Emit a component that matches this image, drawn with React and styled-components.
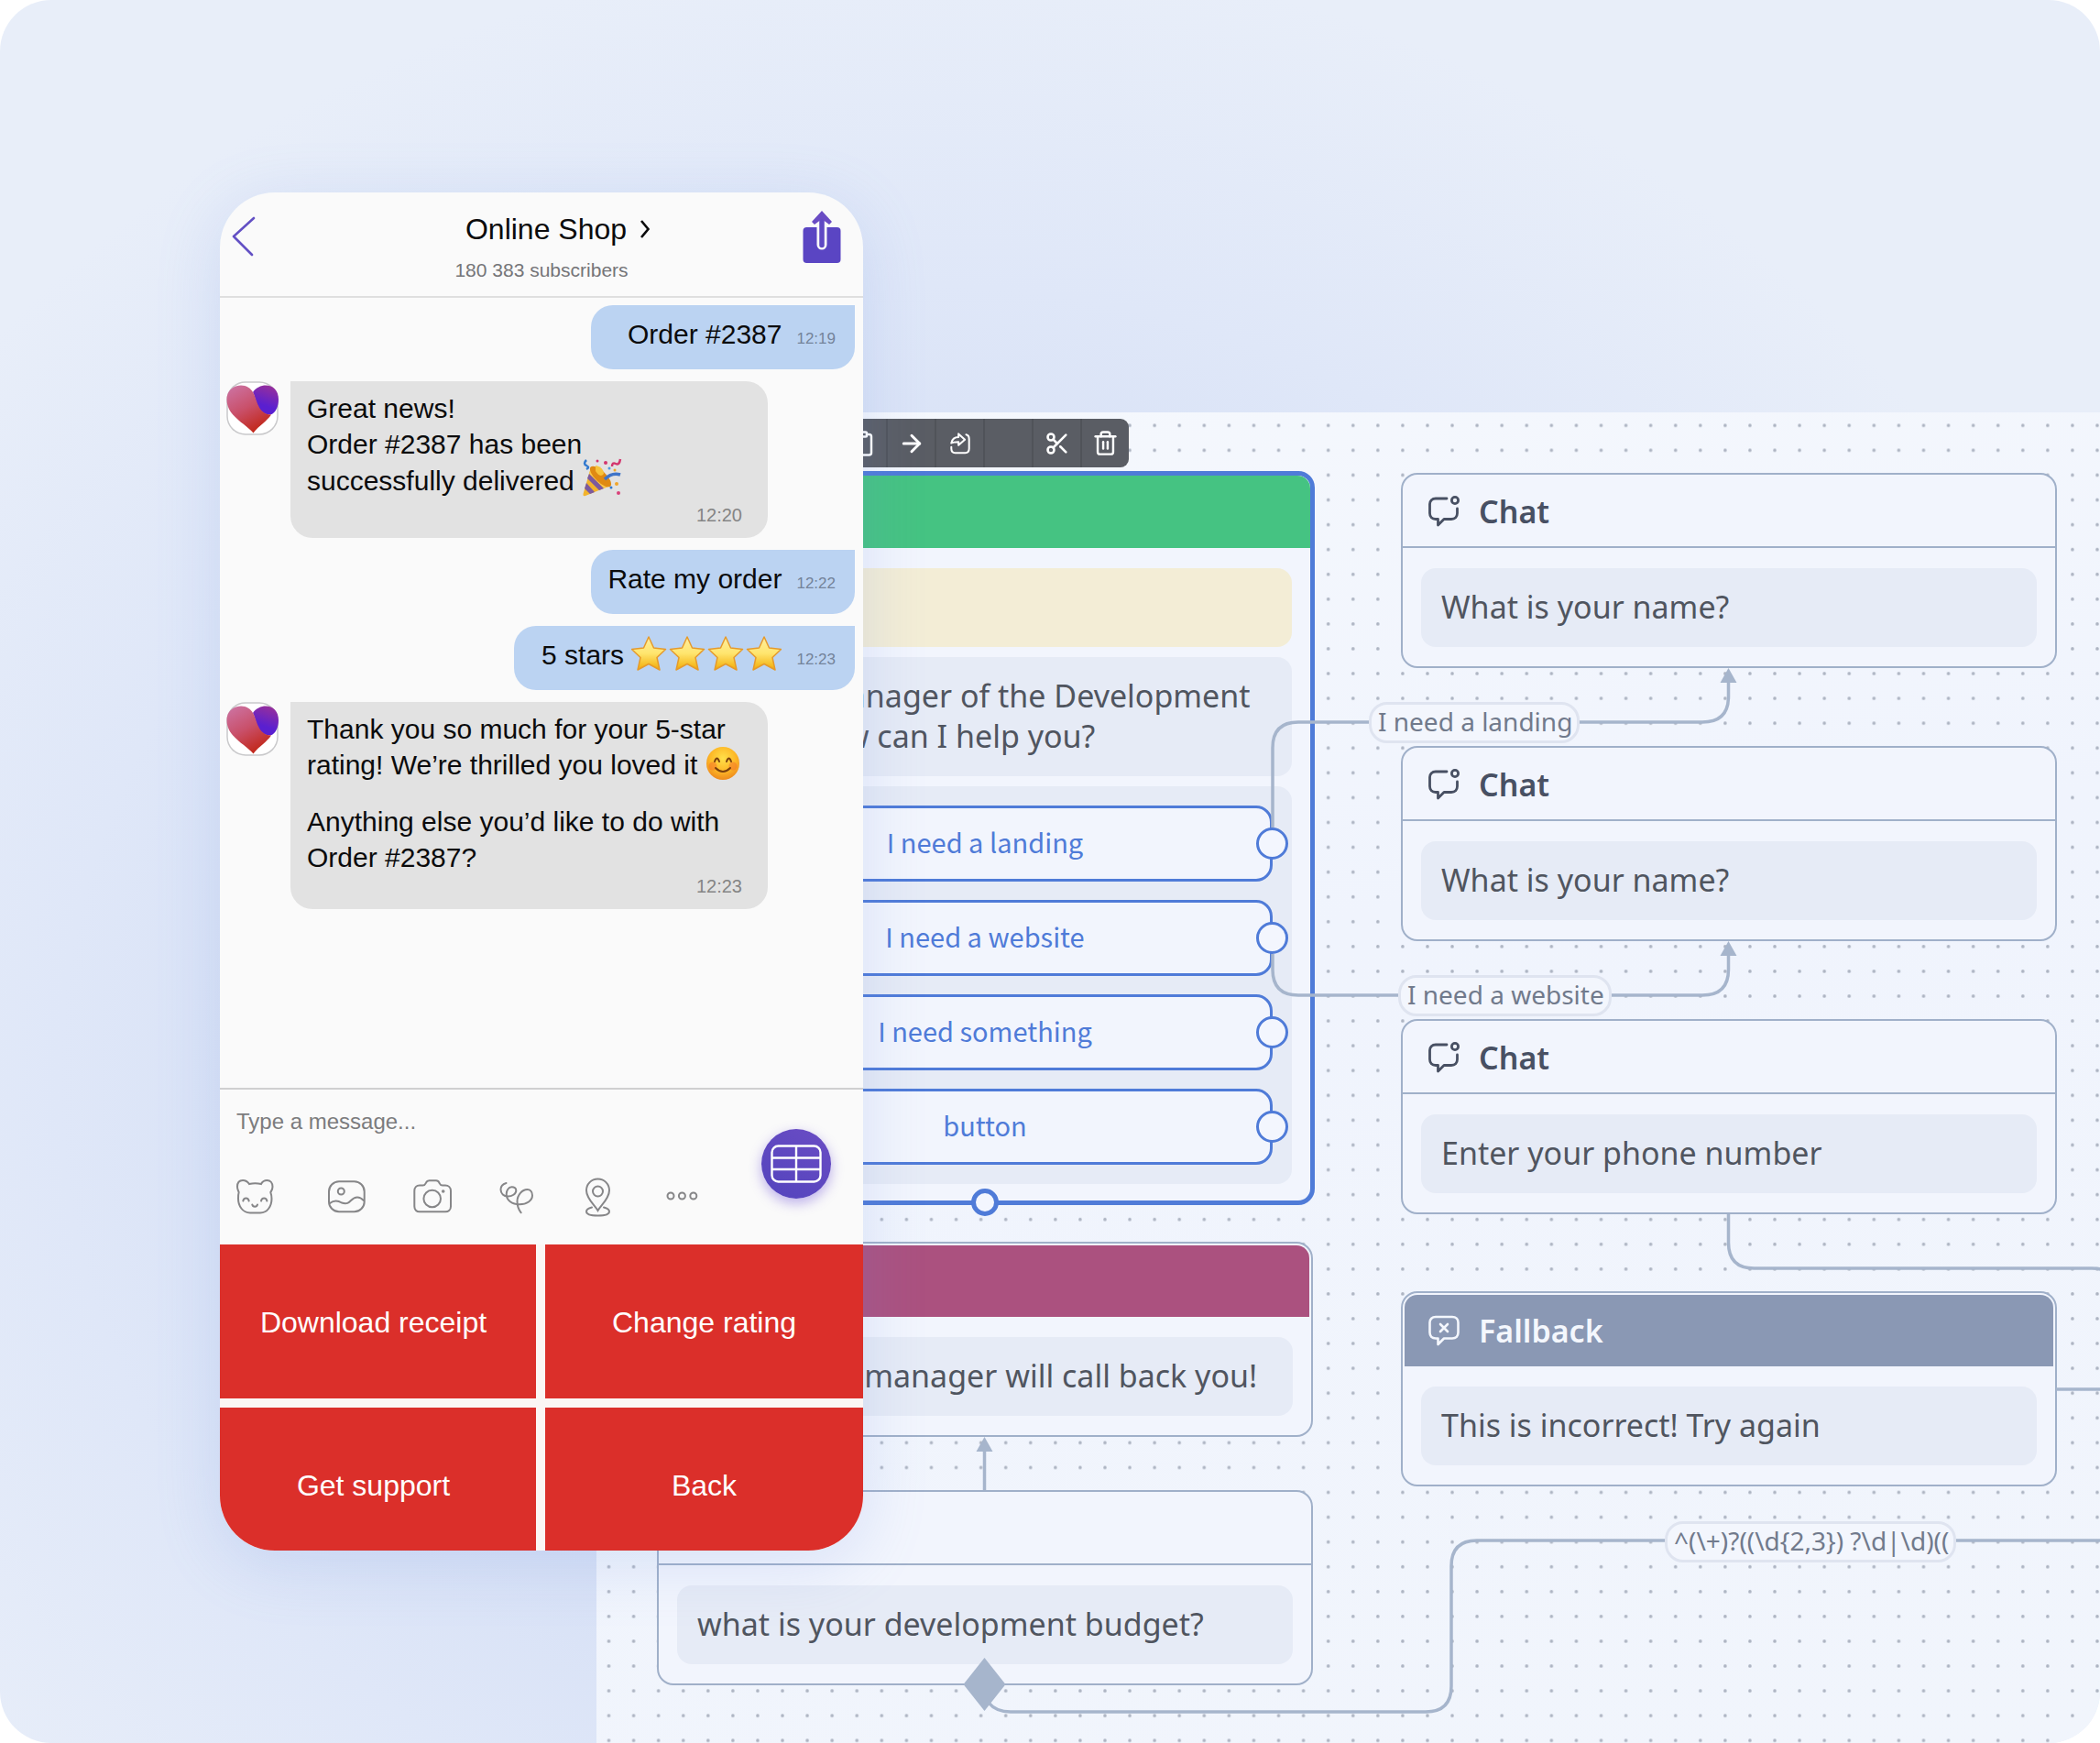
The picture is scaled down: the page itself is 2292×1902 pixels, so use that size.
import React from 'react';
import styled, { createGlobalStyle } from 'styled-components';
import { ArrowRight, Clipboard, Scissors, Trash2 } from 'lucide-react';

const GlobalStyle = createGlobalStyle`
  * {
    box-sizing: border-box;
  }

  body {
    margin: 0;
    background: #fff;
  }

  button, input {
    margin: 0;
    padding: 0;
    border: 0;
    background: none;
    color: inherit;
    font: inherit;
  }

  p, h1, h2 {
    margin: 0;
    font-weight: inherit;
    font-size: inherit;
  }

  svg {
    display: block;
    flex: none;
  }
`;

const Stage = styled.main`
  display: grid;
  grid-template-columns: 1fr;
  min-height: 100vh;
  border-radius: 56px;
  overflow: hidden;
  background: radial-gradient(ellipse at 44% 62%, #cad7f2 0%, #d5dff5 32%, #dfe7f8 52%, #e8eef9 74%);
`;

/* ---------- Flow board ---------- */

const Board = styled.section`
  grid-area: 1 / 1;
  position: relative;
  margin: 450px 0 0 651px;
  min-height: 1452px;
  overflow: hidden;
  background: linear-gradient(170deg, #f5f8fd 0%, #f0f4fd 40%, #f1f5fc 100%);
  font-family: 'Noto Sans', 'Open Sans', sans-serif;
  color: #50555f;
`;

const Layer = styled.svg`
  position: absolute;
  inset: 0;
  width: 100%;
  height: 100%;
  pointer-events: none;
`;

const Node = styled.article`
  position: absolute;
  left: ${(props) => props.$x}px;
  top: ${(props) => props.$y}px;
  width: ${(props) => (props.$selected ? 720 : 716)}px;
  border: ${(props) => (props.$selected ? '5px solid #4f7bd8' : '2px solid #a0b0c9')};
  border-radius: 18px;
  background: #f2f5fd;
`;

const NodeHeader = styled.header`
  display: flex;
  align-items: center;
  gap: 21px;
  height: 80px;
  padding: 2px 28px 0;
  border-bottom: 2px solid #a0b0c9;
  font-size: 34px;
  font-weight: 600;
  line-height: 44px;
  color: #485063;
`;

const FilledHeader = styled(NodeHeader)`
  height: 78px;
  margin: 2px 2px 0;
  padding: 0 26px;
  border: 0;
  border-radius: 14px 14px 0 0;
  background: ${(props) => props.$color};
  color: #f4f7fd;
`;

const SelectedHeader = styled(FilledHeader)`
  height: 79px;
  margin: 0;
`;

const NodeBody = styled.div`
  display: flex;
  flex-direction: column;
  gap: 11px;
  padding: 22px 20px ${(props) => (props.$tight ? 18 : 21)}px;
`;

const Block = styled.div`
  min-height: 86px;
  padding: 20px 22px 22px;
  border-radius: 16px;
  background: ${(props) => props.$color || '#e6ebf6'};
  font-size: 34px;
  line-height: 44px;
  white-space: nowrap;
`;

const ReplyList = styled.div`
  display: flex;
  flex-direction: column;
  gap: 20px;
  padding: 21px;
  border-radius: 16px;
  background: #e6ebf6;
`;

const Reply = styled.button`
  position: relative;
  height: 83px;
  padding-bottom: 5px;
  border: 3px solid #4f7bd8;
  border-radius: 18px;
  background: #f2f5fd;
  font-family: 'Noto Sans CJK SC', 'Noto Sans', sans-serif;
  font-size: 29px;
  line-height: 44px;
  color: #4f7bd8;
`;

const ReplyHandle = styled.span`
  position: absolute;
  top: 21px;
  right: -20px;
  width: 35px;
  height: 35px;
  border: 3px solid #4f7bd8;
  border-radius: 50%;
  background: #f3f6fe;
`;

const NodeHandle = styled.span`
  position: absolute;
  left: calc(50% - 15px);
  bottom: -17px;
  width: 30px;
  height: 30px;
  border: 5px solid #4f7bd8;
  border-radius: 50%;
  background: #f3f6fe;
`;

const Chip = styled.span`
  position: absolute;
  left: ${(props) => props.$x}px;
  top: ${(props) => props.$y}px;
  padding: 0 5px 2px 7px;
  border: 3px solid #dfe4f0;
  border-radius: 20px;
  background: #f3f6fd;
  font-size: 28px;
  line-height: 37px;
  white-space: nowrap;
  color: #717a8c;
`;

const Toolbar = styled.div`
  position: absolute;
  left: 263px;
  top: 7px;
  display: flex;
  height: 53px;
  border-radius: 9px;
  overflow: hidden;
  background: #5a5d64;
`;

const ToolButton = styled.button`
  display: flex;
  align-items: center;
  justify-content: center;
  width: 53px;
  color: #fff;

  & + & {
    border-left: 2px solid #505359;
  }
`;

const ChatIcon = () => (
  <svg width="34" height="34" viewBox="0 0 34 34" fill="none" stroke="currentColor" strokeWidth="2.8" strokeLinecap="round" strokeLinejoin="round">
    <path d="M20 3H8C4 3 1.5 5.5 1.5 9V19C1.5 23 4 25.5 8 25.5H10.5V32L17 25.5H25C29 25.5 31.5 23 31.5 19V14" />
    <circle cx="29" cy="5" r="3.6" />
  </svg>
);

const FallbackIcon = () => (
  <svg width="34" height="34" viewBox="0 0 34 34" fill="none" stroke="currentColor" strokeWidth="2.6" strokeLinecap="round" strokeLinejoin="round">
    <path d="M8 2H26C30 2 32.5 4.5 32.5 8V19C32.5 23 30 25.5 26 25.5H17L10.5 32V25.5H8C4 25.5 1.5 23 1.5 19V8C1.5 4.5 4 2 8 2Z" />
    <path d="M13 10L21 18M21 10L13 18" />
  </svg>
);

const RedirectIcon = () => (
  <svg width="24" height="24" viewBox="0 0 26 26" fill="none" stroke="currentColor" strokeWidth="2.2" strokeLinecap="round" strokeLinejoin="round">
    <path d="M20 2.5C22.5 3 23.5 5 23.5 7.5V19C23.5 22 22 24 19 24H7C4 24 2.5 22 2.5 19V17" />
    <path d="M2.5 12.5C3.5 7.5 7 5.5 11 5.5V1.5L18.5 8.5L11 15V11C7.5 11 4.5 11 2.5 12.5Z" />
  </svg>
);

const chatNodes = [
  { y: 66, text: 'What is your name?' },
  { y: 364, text: 'What is your name?' },
  { y: 662, text: 'Enter your phone number' },
];

const replies = ['I need a landing', 'I need a website', 'I need something', 'button'];

const Flow = () => (
  <Board aria-label="Flow board">
    <Layer aria-hidden="true">
      <defs>
        <pattern id="dots" x="0" y="0.8" width="27.075" height="27.075" patternUnits="userSpaceOnUse">
          <circle cx="13.5" cy="13.5" r="1.8" fill="#adb4c2" />
        </pattern>
      </defs>
      <rect width="100%" height="100%" fill="url(#dots)" />
    </Layer>

    <Toolbar role="toolbar" aria-label="Block actions">
      <ToolButton aria-label="Copy">
        <Clipboard size={30} />
      </ToolButton>
      <ToolButton aria-label="Connect">
        <ArrowRight size={30} strokeWidth={2.4} />
      </ToolButton>
      <ToolButton aria-label="Redirect">
        <RedirectIcon />
      </ToolButton>
      <ToolButton aria-label="Empty" />
      <ToolButton aria-label="Cut">
        <Scissors size={28} strokeWidth={2.2} />
      </ToolButton>
      <ToolButton aria-label="Delete">
        <Trash2 size={29} strokeWidth={2} />
      </ToolButton>
    </Toolbar>

    <Node $x={64} $y={64} $selected>
      <SelectedHeader $color="#45c382" />
      <NodeBody $tight>
        <Block $color="#f3edd6" />
        <Block>
          Hi, I am manager of the Development
          <br />
          group. How can I help you?
        </Block>
        <ReplyList>
          {replies.map((label) => (
            <Reply key={label}>
              {label}
              <ReplyHandle />
            </Reply>
          ))}
        </ReplyList>
      </NodeBody>
      <NodeHandle />
    </Node>

    <Node $x={66} $y={905}>
      <FilledHeader $color="#ab517f" />
      <NodeBody>
        <Block>Super! Our manager will call back you!</Block>
      </NodeBody>
    </Node>

    <Node $x={66} $y={1176}>
      <NodeHeader />
      <NodeBody>
        <Block>what is your development budget?</Block>
      </NodeBody>
    </Node>

    {chatNodes.map((node) => (
      <Node key={node.y} $x={878} $y={node.y}>
        <NodeHeader>
          <ChatIcon />
          <h2>Chat</h2>
        </NodeHeader>
        <NodeBody>
          <Block>{node.text}</Block>
        </NodeBody>
      </Node>
    ))}

    <Node $x={878} $y={959}>
      <FilledHeader $color="#8a98b4">
        <FallbackIcon />
        <h2>Fallback</h2>
      </FilledHeader>
      <NodeBody>
        <Block>This is incorrect! Try again</Block>
      </NodeBody>
    </Node>

    <Layer aria-hidden="true" fill="none" stroke="#a6b5cc" strokeWidth="3.5">
      <path d="M738 453V366Q738 338 766 338H1207Q1235.5 338 1235.5 310V290" />
      <path d="M738 591V608Q738 636 766 636H1207Q1235.5 636 1235.5 608V588" />
      <path d="M1235.5 875V906Q1235.5 934 1263.5 934H1632Q1660 934 1660 962" />
      <path d="M1593 1066H3000" />
      <path d="M423.5 1176V1130" />
      <path d="M428 1408Q436 1418 452 1418H905Q933 1418 933 1390V1259Q933 1231 961 1231H3000" />
      <g fill="#a6b5cc" stroke="none">
        <path d="M1235.5 279L1244.5 295H1226.5Z" />
        <path d="M1235.5 577L1244.5 593H1226.5Z" />
        <path d="M423.5 1118L432.5 1134H414.5Z" />
        <path d="M423.5 1359L446.5 1388L423.5 1417L400.5 1388Z" />
      </g>
    </Layer>

    <Chip $x={843} $y={316}>I need a landing</Chip>
    <Chip $x={875} $y={614}>I need a website</Chip>
    <Chip $x={1166} $y={1210}>{'^(\\+)?((\\d{2,3}) ?\\d|\\d)(('}</Chip>
  </Board>
);

/* ---------- Messenger ---------- */

const Phone = styled.section`
  grid-area: 1 / 1;
  align-self: start;
  z-index: 1;
  width: 702px;
  margin: 210px 0 210px 240px;
  border-radius: 60px;
  overflow: hidden;
  background: #fafafa;
  box-shadow: 0 14px 70px rgba(110, 145, 225, 0.2);
  font-family: 'Liberation Sans', Arial, sans-serif;
  color: #0b0b0c;
`;

const PhoneHeader = styled.header`
  display: flex;
  justify-content: space-between;
  align-items: flex-start;
  height: 115px;
  padding: 20px 24px 0 13px;
  border-bottom: 2px solid #dfdfdf;
`;

const BackButton = styled.button`
  width: 53px;
  padding-top: 6px;
`;

const Heading = styled.div`
  display: flex;
  flex-direction: column;
  align-items: center;
  gap: 12px;
`;

const Title = styled.h1`
  display: flex;
  align-items: center;
  gap: 14px;
  padding-left: 36px;
  font-size: 32px;
  font-weight: 400;
  line-height: 40px;
`;

const Subtitle = styled.p`
  font-size: 21px;
  line-height: 26px;
  color: #757578;
`;

const Messages = styled.div`
  display: flex;
  flex-direction: column;
  gap: 13px;
  min-height: 862px;
  padding: 8px 9px 8px 7px;
`;

const Outgoing = styled.div`
  align-self: flex-end;
  display: flex;
  justify-content: flex-end;
  align-items: baseline;
  gap: 16px;
  min-width: 288px;
  height: 70px;
  padding: 12px 21px 0 ${(props) => (props.$roomy ? 30 : 18)}px;
  border-radius: 24px 0 24px 24px;
  background: #bbd3f2;
  font-size: 30px;
  line-height: 39px;
`;

const OutgoingTime = styled.time`
  font-size: 17px;
  color: #74839a;
`;

const IncomingRow = styled.div`
  display: flex;
  align-items: flex-start;
  gap: 13px;
`;

const Incoming = styled.div`
  display: flex;
  flex-direction: column;
  justify-content: space-between;
  width: 521px;
  min-height: 171px;
  padding: 10px 28px 13px 18px;
  border-radius: 0 24px 24px 24px;
  background: #e2e2e2;
  font-size: 30px;
  line-height: 39px;
`;

const Paragraph = styled.p`
  white-space: nowrap;

  & + & {
    margin-top: 23px;
  }
`;

const IncomingTime = styled.time`
  align-self: flex-end;
  font-size: 20px;
  line-height: 24px;
  color: #858585;
`;

const Emoji = styled.svg`
  display: inline-block;
  margin: -4px 0 -4px;
  vertical-align: -3px;
`;

const Composer = styled.form`
  display: flex;
  justify-content: space-between;
  align-items: flex-start;
  height: 171px;
  padding: 0 35px 0 18px;
  border-top: 2px solid #cfcfd0;
`;

const ComposerMain = styled.div`
  display: flex;
  flex-direction: column;
  gap: 42px;
  padding-top: 17px;
`;

const MessageInput = styled.input`
  width: 506px;
  height: 36px;
  font-size: 24px;
  outline: none;

  &::placeholder {
    color: #7c7c7e;
    opacity: 1;
  }
`;

const Attachments = styled.div`
  display: flex;
  gap: 50px;
  color: #868688;
`;

const KeyboardButton = styled.button`
  display: flex;
  align-items: center;
  justify-content: center;
  width: 76px;
  height: 76px;
  margin-top: 43px;
  border-radius: 50%;
  background: linear-gradient(30deg, #5344bd, #6a4cc4);
  box-shadow: 0 5px 14px rgba(92, 60, 210, 0.4);
`;

const Keyboard = styled.div`
  display: grid;
  grid-template-columns: 345px 1fr;
  grid-template-rows: 168px 156px;
  gap: 10px;
  background: #fbf6f4;
`;

const KeyboardKey = styled.button`
  height: 168px;
  padding-top: 2px;
  padding-right: ${(props) => (props.$left ? 10 : 0)}px;
  background: #db2f2a;
  font-size: 32px;
  line-height: 39px;
  color: #fff;
`;

const Avatar = () => (
  <svg width="57" height="59" viewBox="0 0 57 59" role="img" aria-label="Online Shop">
    <defs>
      <linearGradient id="heartRed" x1="0" y1="0" x2="0.5" y2="1">
        <stop offset="0.1" stopColor="#cc6f9c" />
        <stop offset="0.55" stopColor="#c9506a" />
        <stop offset="1" stopColor="#c22a1f" />
      </linearGradient>
      <linearGradient id="heartViolet" x1="0.7" y1="0" x2="0.4" y2="1">
        <stop offset="0" stopColor="#98309a" />
        <stop offset="0.7" stopColor="#5a1fd0" />
      </linearGradient>
    </defs>
    <rect x="1" y="1" width="55" height="57" rx="20" fill="#fff" stroke="#c9c9cb" strokeWidth="1.5" />
    <path d="M29 12C32 7 38 4.5 43 4.5C51 4.5 57 10 57 20C57 27 54 35 48 36.5C33 36 33 20 29 12Z" fill="url(#heartViolet)" />
    <path d="M29.5 56.5C21 46 0.5 38 0.5 20C0.5 10 8 4.5 16 4.5C22 4.5 27 8 29 12C34 20 34 36 49 36.5C44 44 36 48 29.5 56.5Z" fill="url(#heartRed)" />
  </svg>
);

const PartyPopper = () => (
  <Emoji width="44" height="42" viewBox="0 0 44 42" role="img" aria-label="Party popper">
    <path d="M10 10L31 30L4 41Q1 42 1.5 39Z" fill="#f2b32c" />
    <path d="M10 10L31 30L24 33L8 17Z" fill="#f9c74a" />
    <path d="M8 17L24 33L19 35L6 22ZM5 27L14 37L9 39L3 33Z" fill="#7c5a9e" />
    <ellipse cx="20.5" cy="20" rx="6" ry="15" transform="rotate(-46 20.5 20)" fill="#e08a12" />
    <path d="M15 8Q24 10 24 17Q20 22 15 14Z" fill="#f7c33a" />
    <path d="M25 23Q33 15 42 18" fill="none" stroke="#3f74c8" strokeWidth="3.5" />
    <path d="M5 2Q1 6 5 8T5 12" fill="none" stroke="#3179cf" strokeWidth="2.5" />
    <path d="M33 9Q33 4 37 6T42 1" fill="none" stroke="#d3366e" strokeWidth="2.5" />
    <circle cx="17" cy="3" r="1.5" fill="#d3366e" />
    <circle cx="26" cy="5" r="2" fill="#d3366e" />
    <circle cx="30" cy="11" r="1.5" fill="#4f9be0" />
    <circle cx="38" cy="28" r="2" fill="#f0a52b" />
    <circle cx="32" cy="32" r="1.5" fill="#3179cf" />
    <circle cx="40" cy="38" r="2" fill="#d8417a" />
    <circle cx="36" cy="13" r="1.5" fill="#f0a52b" />
  </Emoji>
);

const SmilingFace = () => (
  <Emoji width="38" height="38" viewBox="0 0 38 38" role="img" aria-label="Smiling face">
    <defs>
      <radialGradient id="face" cx="0.5" cy="0.35" r="0.65">
        <stop offset="0" stopColor="#ffe04a" />
        <stop offset="0.6" stopColor="#fdb827" />
        <stop offset="1" stopColor="#ee8a1d" />
      </radialGradient>
    </defs>
    <circle cx="19" cy="19" r="18" fill="url(#face)" />
    <circle cx="8" cy="22" r="4.5" fill="#f4702a" opacity="0.5" />
    <circle cx="30" cy="22" r="4.5" fill="#f4702a" opacity="0.5" />
    <path d="M10 17Q12.5 10 15 17M23 17Q25.5 10 28 17M11 24Q19 32 27 24" fill="none" stroke="#7a3f0d" strokeWidth="2" strokeLinecap="round" />
  </Emoji>
);

const Stars = ({ count }) => (
  <Emoji width={count * 42 - 4} height="38" viewBox={`0 0 ${count * 42 - 4} 38`} role="img" aria-label={`${count} stars`}>
    <defs>
      <linearGradient id="star" x1="0" y1="0" x2="0" y2="1">
        <stop offset="0" stopColor="#ffefa0" />
        <stop offset="0.5" stopColor="#ffe56e" />
        <stop offset="1" stopColor="#f2ac05" />
      </linearGradient>
    </defs>
    {Array.from({ length: count }, (_, index) => (
      <path
        key={index}
        transform={`translate(${index * 42} 0)`}
        d="M19 1L24.5 13L37.5 14.5L28 23.5L31 37L19 30.5L7 37L10 23.5L0.5 14.5L13.5 13Z"
        fill="url(#star)"
        stroke="#e59a2c"
        strokeWidth="1.5"
        strokeLinejoin="round"
      />
    ))}
  </Emoji>
);

const BackIcon = () => (
  <svg width="26" height="44" viewBox="0 0 26 44" fill="none" stroke="#6350c4" strokeWidth="2.6" strokeLinecap="round" strokeLinejoin="round">
    <path d="M24 2L2 22L22 42" />
  </svg>
);

const ShareIcon = () => (
  <svg width="42" height="58" viewBox="0 0 42 58" fill="none">
    <rect x="0.5" y="18" width="41" height="39" rx="4" fill="#5a45c3" />
    <path d="M21 16V37" stroke="#fafafa" strokeWidth="11" strokeLinecap="round" />
    <path d="M21 7V37.5" stroke="#5f49c4" strokeWidth="5.5" strokeLinecap="round" />
    <path d="M21 0L32 12L29 15L21 9L13 15L10 12Z" fill="#6a4cc4" />
  </svg>
);

const TableIcon = () => (
  <svg width="56" height="42" viewBox="0 0 56 42" fill="none" stroke="#fff" strokeWidth="2.4">
    <rect x="1.5" y="1.5" width="53" height="39" rx="7" />
    <path d="M28 1.5V40.5M1.5 14.5H54.5M1.5 27H54.5" />
  </svg>
);

const attachments = [
  {
    label: 'Stickers',
    width: 48,
    drawing: (
      <>
        <path d="M14 8C12 5 10 4 7 4C3 4 1 7 1 11C1 14 2 15 2.7 17C2 19 2 21 2 24C2 32 7 39.5 15 39.5H26C34 39.5 38.5 32 38.5 24C38.5 21 38 19 37.3 17C38.5 15 39.5 14 39.5 11C39.5 7 37 4 33.5 4C30.5 4 28.5 5 27 8C23 7 18 7 14 8Z" />
        <path d="M7.3 26.5C8 22.5 13 22.5 13.7 26.5M27 26.5C27.7 22.5 32.7 22.5 33.4 26.5M17.3 30.5C18 33.5 22.3 33.5 23 30.5" />
      </>
    ),
  },
  {
    label: 'Gallery',
    width: 44,
    drawing: (
      <>
        <rect x="3" y="5.3" width="38.7" height="33" rx="11" />
        <circle cx="16.3" cy="16" r="3.5" />
        <path d="M4 29C9 25 13 26 17 28.5C27 32 26 22.5 34 22.5C37 22.5 39 24 41 26" />
      </>
    ),
  },
  {
    label: 'Camera',
    width: 44,
    drawing: (
      <>
        <path d="M8 9.5H11.5C14 9.5 14 8.5 15 6.5C15.7 5 17 4.3 18.5 4.3H26C27.5 4.3 28.7 5 29.3 6.5C30.3 8.5 30.5 9.5 33 9.5H36C39.5 9.5 42 12 42 15.5V32.5C42 36 39.5 38.3 36 38.3H8C4.5 38.3 2.3 36 2.3 32.5V15.5C2.3 12 4.5 9.5 8 9.5Z" />
        <circle cx="21.7" cy="24" r="9.3" />
        <circle cx="33.7" cy="16" r="0.8" />
      </>
    ),
  },
  {
    label: 'Doodle',
    width: 44,
    drawing: (
      <path d="M8.5 7C5 8 2.5 10.5 2.5 14C2.5 18.5 6 21.5 10 21.5C15 21.5 19.3 19 19.3 15C19.3 12.5 17 11.2 14.5 11.3C11 11.5 8.7 15 8.7 19C8.7 26 15 30.3 23 30.3C31 30.3 37 26 37 20.5C37 16.5 34.5 14 31.5 14C26 14 20.5 20 20.5 27C20.5 32 22 36 24.7 39.3" />
    ),
  },
  {
    label: 'Location',
    width: 38,
    drawing: (
      <>
        <path d="M14.5 37C11 31 2 24 2 15C2 8 7.5 2.5 14.5 2.5S27 8 27 15C27 24 18 31 14.5 37Z" />
        <circle cx="14.5" cy="16" r="5.5" />
        <path d="M8 33.5C4 34.5 2 36 2 38C2 41 7 42.5 14.5 42.5S27 41 27 38C27 36 25 34.5 21 33.5" />
      </>
    ),
  },
  {
    label: 'More',
    width: 38,
    drawing: (
      <>
        <circle cx="6" cy="21" r="3.5" />
        <circle cx="18.4" cy="21" r="3.5" />
        <circle cx="30.8" cy="21" r="3.5" />
      </>
    ),
  },
];

const Messenger = () => (
  <Phone aria-label="Online Shop chat">
    <PhoneHeader>
      <BackButton aria-label="Back to chats">
        <BackIcon />
      </BackButton>
      <Heading>
        <Title>
          Online Shop
          <svg width="12" height="22" viewBox="0 0 12 22" fill="none" stroke="currentColor" strokeWidth="2.6">
            <path d="M2 2L9.5 11L2 20" />
          </svg>
        </Title>
        <Subtitle>180 383 subscribers</Subtitle>
      </Heading>
      <button aria-label="Share">
        <ShareIcon />
      </button>
    </PhoneHeader>

    <Messages>
      <Outgoing>
        Order #2387
        <OutgoingTime>12:19</OutgoingTime>
      </Outgoing>
      <IncomingRow>
        <Avatar />
        <Incoming>
          <Paragraph>
            Great news!
            <br />
            Order #2387 has been
            <br />
            successfully delivered <PartyPopper />
          </Paragraph>
          <IncomingTime>12:20</IncomingTime>
        </Incoming>
      </IncomingRow>
      <Outgoing>
        Rate my order
        <OutgoingTime>12:22</OutgoingTime>
      </Outgoing>
      <Outgoing $roomy>
        <span>
          5 stars <Stars count={4} />
        </span>
        <OutgoingTime>12:23</OutgoingTime>
      </Outgoing>
      <IncomingRow>
        <Avatar />
        <Incoming>
          <Paragraph>
            Thank you so much for your 5-star
            <br />
            rating! We’re thrilled you loved it <SmilingFace />
          </Paragraph>
          <Paragraph>
            Anything else you’d like to do with
            <br />
            Order #2387?
          </Paragraph>
          <IncomingTime>12:23</IncomingTime>
        </Incoming>
      </IncomingRow>
    </Messages>

    <Composer onSubmit={(event) => event.preventDefault()}>
      <ComposerMain>
        <MessageInput aria-label="Message" placeholder="Type a message..." />
        <Attachments>
          {attachments.map((item) => (
            <button key={item.label} type="button" aria-label={item.label}>
              <svg width={item.width} height="44" viewBox={`0 0 ${item.width} 44`} fill="none" stroke="currentColor" strokeWidth="2" strokeLinecap="round">
                {item.drawing}
              </svg>
            </button>
          ))}
        </Attachments>
      </ComposerMain>
      <KeyboardButton type="button" aria-label="Bot keyboard">
        <TableIcon />
      </KeyboardButton>
    </Composer>

    <Keyboard>
      <KeyboardKey $left>Download receipt</KeyboardKey>
      <KeyboardKey>Change rating</KeyboardKey>
      <KeyboardKey $left>Get support</KeyboardKey>
      <KeyboardKey>Back</KeyboardKey>
    </Keyboard>
  </Phone>
);

const App = () => (
  <>
    <GlobalStyle />
    <Stage>
      <Flow />
      <Messenger />
    </Stage>
  </>
);

export default App;
